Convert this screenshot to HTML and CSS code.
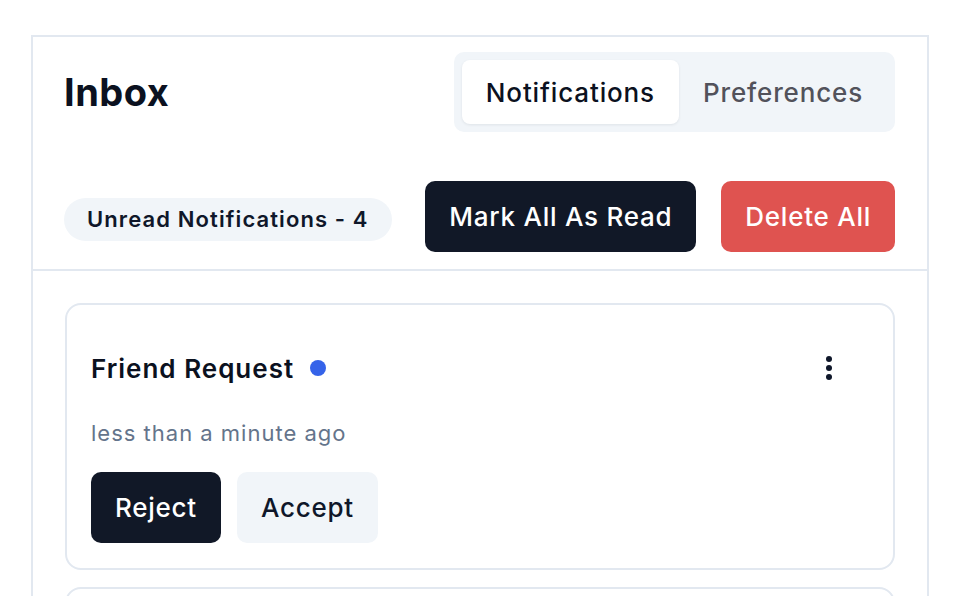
FILE: index.html
```html
<!DOCTYPE html>
<html lang="en">
<head>
    <meta charset="UTF-8">
    <title>Inbox</title>
    <link rel="stylesheet" href="styles.css">
</head>
<body>
    <div class="inbox">
        <div class="inbox-header">
            <div class="header-row">
                <h1>Inbox</h1>
                <div class="tabs">
                    <button class="tab active">Notifications</button>
                    <button class="tab">Preferences</button>
                </div>
            </div>
            <div class="actions-row">
                <span class="badge">Unread Notifications - 4</span>
                <div class="actions">
                    <button class="btn btn-dark">Mark All As Read</button>
                    <button class="btn btn-danger">Delete All</button>
                </div>
            </div>
        </div>
        <div class="list">
            <div class="card">
                <div class="card-top">
                    <div class="card-title">
                        <h2>Friend Request</h2>
                        <span class="dot"></span>
                    </div>
                    <button class="more" aria-label="More">
                        <svg width="24" height="24" viewBox="0 0 24 24" fill="#0f172a">
                            <circle cx="12" cy="3" r="3"/>
                            <circle cx="12" cy="12" r="3"/>
                            <circle cx="12" cy="21" r="3"/>
                        </svg>
                    </button>
                </div>
                <p class="time">less than a minute ago</p>
                <div class="card-actions">
                    <button class="btn btn-dark">Reject</button>
                    <button class="btn btn-light">Accept</button>
                </div>
            </div>
            <div class="card card-next"></div>
        </div>
    </div>
</body>
</html>
```

FILE: styles.css
```css
body { margin: 0; font-family: Inter, "Noto Sans", sans-serif; background: #fff; color: #0f172a; overflow: hidden; height: 596px; }
.inbox { margin: 35px 0 0 31px; width: 898px; box-sizing: border-box; border: 2px solid #e2e8f0; border-bottom: none; }
.inbox-header { padding: 15px 32px 17px; border-bottom: 2px solid #e2e8f0; }
.header-row { display: flex; justify-content: space-between; align-items: center; }
h1 { margin: 0 0 0 -1px; font-size: 38px; font-weight: 700; letter-spacing: 0.5px; color: #0b1120; }
.tabs { display: flex; background: #f1f5f9; padding: 8px; border-radius: 10px; }
.tab { border: none; background: transparent; font-family: inherit; font-size: 26px; font-weight: 500; letter-spacing: 0.85px; color: #52525b; height: 64px; padding: 0 24px; border-radius: 8px; }
.tab.active { background: #fff; color: #0b1120; box-shadow: 0 1px 3px #0f172a14; }
.actions-row { display: flex; justify-content: space-between; align-items: center; margin-top: 49px; }
.badge { background: #f1f5f9; color: #0f172a; font-size: 22px; font-weight: 600; letter-spacing: 1.1px; padding: 0 23px; height: 43px; line-height: 43px; border-radius: 22px; margin-top: 5px; margin-left: -1px; }
.actions { display: flex; gap: 25px; }
.btn { border: none; font-family: inherit; font-size: 26px; font-weight: 500; letter-spacing: 0.75px; height: 71px; padding: 0 24px; border-radius: 10px; }
.btn-dark { background: #111827; color: #fff; }
.btn-danger { background: #df5350; color: #fff; }
.btn-light { background: #f1f5f9; color: #0f172a; }
.list { padding: 32px 32px 0; display: flex; flex-direction: column; gap: 17px; }
.card { border: 2px solid #e2e8f0; border-radius: 16px; padding: 38px 24px 25px; }
.card-next { height: 60px; padding: 0; }
.card-top { display: flex; justify-content: space-between; align-items: center; height: 50px; }
.card-title { display: flex; align-items: center; gap: 16px; }
h2 { margin: 0; font-size: 26px; font-weight: 600; letter-spacing: 1px; color: #0b1120; }
.dot { width: 16px; height: 16px; border-radius: 50%; background: #3563e9; }
.more { border: none; background: transparent; width: 64px; height: 64px; margin-right: 8px; display: flex; align-items: center; justify-content: center; }
.time { margin: 24px 0 0; font-size: 22px; line-height: 32px; letter-spacing: 1px; color: #64748b; }
.card-actions { display: flex; gap: 16px; margin-top: 23px; }
```
